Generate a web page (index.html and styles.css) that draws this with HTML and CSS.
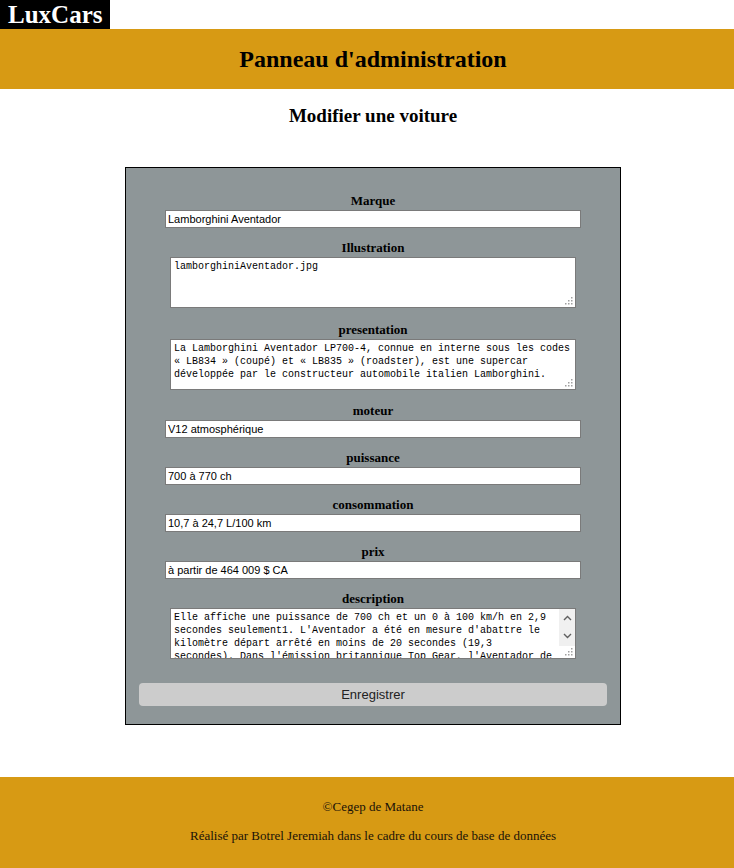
FILE: index.html
```html
<!DOCTYPE html>
<html lang="fr">
<head>
<meta charset="utf-8">
<title>LuxCars - Modifier une voiture</title>
<link rel="stylesheet" href="styles.css">
</head>
<body>
<header class="site-header">
  <div class="logo">LuxCars</div>
  <div class="banner"><h1 class="banner-title">Panneau d'administration</h1></div>
</header>
<main class="content">
  <h2 class="page-title">Modifier une voiture</h2>
  <form class="car-form">
    <div class="field">
      <label class="field-label">Marque</label>
      <input class="text-input" type="text" value="Lamborghini Aventador">
    </div>
    <div class="field field-area">
      <label class="field-label">Illustration</label>
      <div class="area-wrap">
        <textarea class="text-area">lamborghiniAventador.jpg</textarea>
        <svg class="grip" width="8" height="8" viewBox="0 0 8 8"><g fill="#a0a0a0"><rect x="6" y="0" width="1.5" height="1.5"/><rect x="3" y="3" width="1.5" height="1.5"/><rect x="6" y="3" width="1.5" height="1.5"/><rect x="0" y="6" width="1.5" height="1.5"/><rect x="3" y="6" width="1.5" height="1.5"/><rect x="6" y="6" width="1.5" height="1.5"/></g></svg>
      </div>
    </div>
    <div class="field field-area">
      <label class="field-label">presentation</label>
      <div class="area-wrap">
        <textarea class="text-area">La Lamborghini Aventador LP700-4, connue en interne sous les codes « LB834 » (coupé) et « LB835 » (roadster), est une supercar développée par le constructeur automobile italien Lamborghini.</textarea>
        <svg class="grip" width="8" height="8" viewBox="0 0 8 8"><g fill="#a0a0a0"><rect x="6" y="0" width="1.5" height="1.5"/><rect x="3" y="3" width="1.5" height="1.5"/><rect x="6" y="3" width="1.5" height="1.5"/><rect x="0" y="6" width="1.5" height="1.5"/><rect x="3" y="6" width="1.5" height="1.5"/><rect x="6" y="6" width="1.5" height="1.5"/></g></svg>
      </div>
    </div>
    <div class="field">
      <label class="field-label">moteur</label>
      <input class="text-input" type="text" value="V12 atmosphérique">
    </div>
    <div class="field">
      <label class="field-label">puissance</label>
      <input class="text-input" type="text" value="700 à 770 ch">
    </div>
    <div class="field">
      <label class="field-label">consommation</label>
      <input class="text-input" type="text" value="10,7 à 24,7 L/100 km">
    </div>
    <div class="field">
      <label class="field-label">prix</label>
      <input class="text-input" type="text" value="à partir de 464 009 $ CA">
    </div>
    <div class="field field-area">
      <label class="field-label">description</label>
      <div class="area-wrap">
        <textarea class="text-area text-area-scroll">Elle affiche une puissance de 700 ch et un 0 à 100 km/h en 2,9 secondes seulement1. L'Aventador a été en mesure d'abattre le kilomètre départ arrêté en moins de 20 secondes (19,3 secondes). Dans l'émission britannique Top Gear, l'Aventador de série a bouclé le circuit en 1 min 16 s 5.</textarea>
        <div class="scroll-strip">
          <svg width="9" height="6" viewBox="0 0 9 6"><path d="M1 5 L4.5 1.5 L8 5" fill="none" stroke="#606060" stroke-width="1.4"/></svg>
          <svg width="9" height="6" viewBox="0 0 9 6"><path d="M1 1 L4.5 4.5 L8 1" fill="none" stroke="#606060" stroke-width="1.4"/></svg>
        </div>
        <svg class="grip" width="8" height="8" viewBox="0 0 8 8"><g fill="#a0a0a0"><rect x="6" y="0" width="1.5" height="1.5"/><rect x="3" y="3" width="1.5" height="1.5"/><rect x="6" y="3" width="1.5" height="1.5"/><rect x="0" y="6" width="1.5" height="1.5"/><rect x="3" y="6" width="1.5" height="1.5"/><rect x="6" y="6" width="1.5" height="1.5"/></g></svg>
      </div>
    </div>
    <button class="save-button" type="button">Enregistrer</button>
  </form>
</main>
<footer class="site-footer">
  <p class="footer-line">©Cegep de Matane</p>
  <p class="footer-line">Réalisé par Botrel Jeremiah dans le cadre du cours de base de données</p>
</footer>
</body>
</html>
```

FILE: styles.css
```css
html, body {
  margin: 0;
  padding: 0;
  background: #ffffff;
  font-family: "Liberation Serif", "Times New Roman", serif;
  color: #000;
}

.site-header {
  display: flex;
  flex-direction: column;
}

.logo {
  align-self: flex-start;
  background: #000;
  color: #fff;
  font-weight: bold;
  font-size: 25px;
  line-height: 29px;
  height: 29px;
  padding: 0 8px;
}

.banner {
  background: #d79a14;
  height: 60px;
  padding-left: 12px;
  display: flex;
  align-items: center;
  justify-content: center;
}

.banner-title {
  margin: 0;
  font-size: 24px;
  font-weight: bold;
  line-height: 28px;
}

.content {
  display: flex;
  flex-direction: column;
  align-items: center;
  padding-left: 12px;
}

.page-title {
  margin: 16px 0 0;
  font-size: 19px;
  line-height: 22px;
  font-weight: bold;
}

.car-form {
  margin-top: 40px;
  width: 494px;
  background: #8e9698;
  border: 1px solid #000;
  display: flex;
  flex-direction: column;
  align-items: center;
  padding: 25px 0 18px;
}

.field {
  display: flex;
  flex-direction: column;
  align-items: center;
  margin-bottom: 12px;
}

.field-area {
  margin-bottom: 13.5px;
}

.field-label {
  font-weight: bold;
  font-size: 13px;
  line-height: 16px;
  margin-bottom: 1px;
}

.text-input {
  box-sizing: border-box;
  width: 416px;
  height: 18px;
  margin: 0;
  padding: 0 2px;
  border: 1px solid #7a7a7a;
  background: #fff;
  font-family: "Liberation Sans", Arial, sans-serif;
  font-size: 11px;
  color: #000;
}

.area-wrap {
  position: relative;
  width: 406px;
  height: 51px;
}

.text-area {
  box-sizing: border-box;
  display: block;
  width: 406px;
  height: 51px;
  margin: 0;
  padding: 2px 3px;
  border: 1px solid #7a7a7a;
  background: #fff;
  font-family: "Liberation Mono", "Courier New", monospace;
  font-size: 10px;
  line-height: 13px;
  color: #000;
  resize: none;
  overflow: hidden;
}

.text-area-scroll {
  padding-right: 20px;
}

.grip {
  position: absolute;
  right: 3px;
  bottom: 3px;
}

.scroll-strip {
  position: absolute;
  top: 1px;
  right: 1px;
  width: 16px;
  height: 37px;
  background: #f0f0f0;
  display: flex;
  flex-direction: column;
  align-items: center;
  justify-content: space-between;
  padding: 6px 0 7px;
  box-sizing: border-box;
}

.save-button {
  margin-top: 10.5px;
  width: 468px;
  height: 23px;
  border: none;
  border-radius: 4px;
  background: #cccccc;
  font-family: "Liberation Sans", Arial, sans-serif;
  font-size: 13px;
  color: #222;
  padding: 0;
}

.site-footer {
  margin-top: 52px;
  background: #d79a14;
  padding: 8px 0 12px 12px;
  text-align: center;
}

.footer-line {
  margin: 14px 0;
  font-size: 13px;
  line-height: 15px;
  color: #1a1208;
}
```
